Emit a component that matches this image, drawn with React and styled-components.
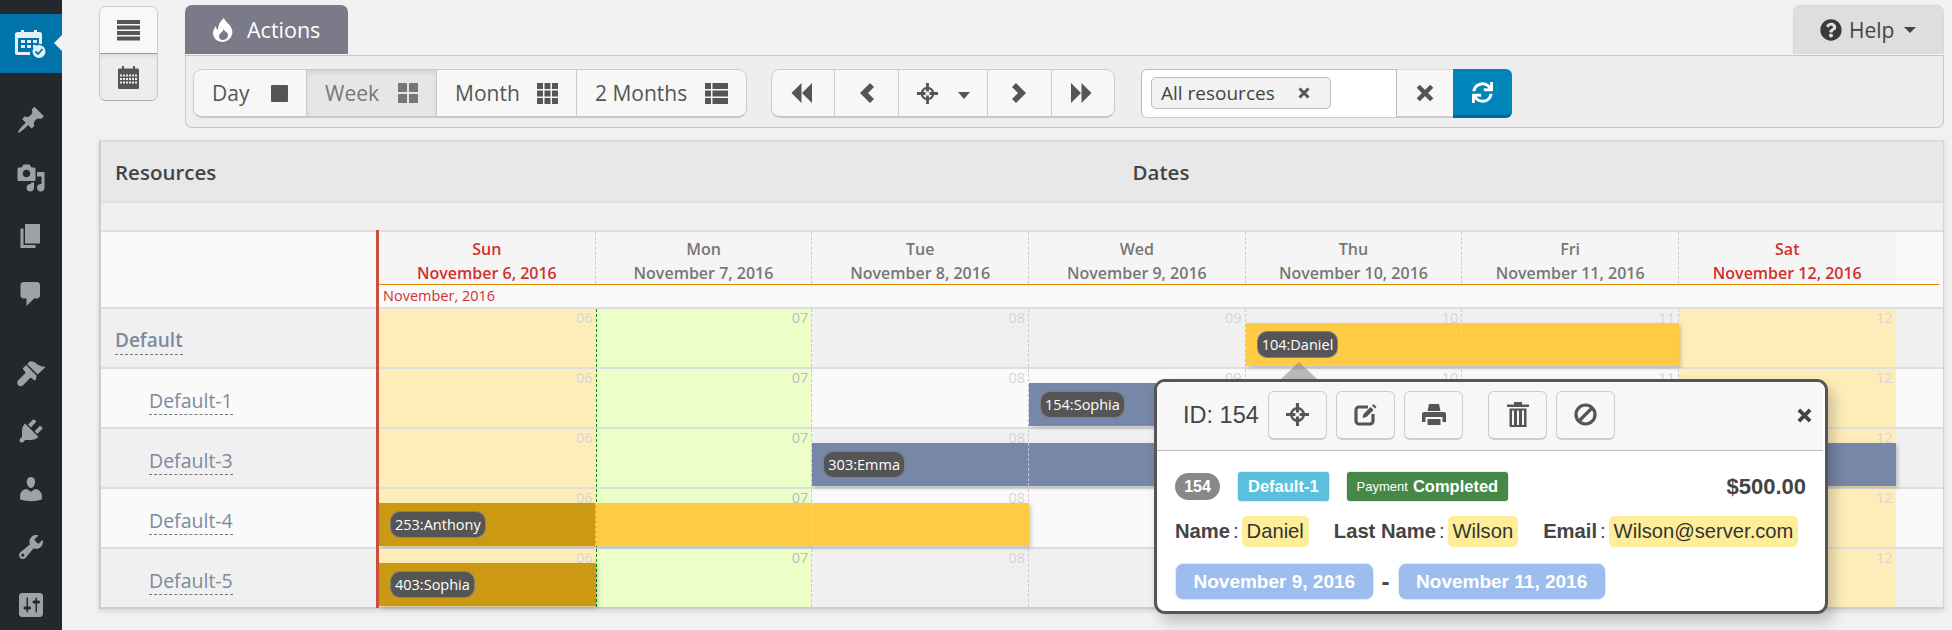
import styled, { createGlobalStyle } from "styled-components";
import { FaSync, FaQuestionCircle } from "react-icons/fa";

const DAY = 216.67;
const UI_FONT = `"Open Sans", "Noto Sans", sans-serif`;

const GlobalStyle = createGlobalStyle`
  html, body {
    margin: 0;
    padding: 0;
    background: #f1f1f1;
    font-family: ${UI_FONT};
    color: #444;
    overflow: hidden;
  }
  * { box-sizing: border-box; }
`;

const dashicons = {
  pin: "M10.44 3.02l1.82-1.82 6.36 6.35-1.83 1.82c-1.05-.68-2.48-.57-3.41.36l-.75.75c-.92.93-1.04 2.35-.35 3.41l-1.83 1.82-2.41-2.41-2.8 2.79c-.42.42-3.38 2.71-3.8 2.29s1.86-3.39 2.28-3.81l2.79-2.79L4.1 9.36l1.83-1.82c1.05.69 2.48.57 3.4-.36l.75-.75c.93-.92 1.05-2.35.36-3.41z",
  media: "M13 11V4c0-.55-.45-1-1-1h-1.67L9 1H5L3.67 3H2c-.55 0-1 .45-1 1v7c0 .55.45 1 1 1h10c.55 0 1-.45 1-1zM7 4.5c1.38 0 2.5 1.12 2.5 2.5S8.38 9.5 7 9.5 4.5 8.38 4.5 7 5.62 4.5 7 4.5zM14 6h5v10.5c0 1.38-1.12 2.5-2.5 2.5S14 17.88 14 16.5s1.12-2.5 2.5-2.5c.17 0 .34.02.5.05V9h-3V6zm-4 8.05V13h2v3.5c0 1.38-1.12 2.5-2.5 2.5S7 17.88 7 16.5 8.12 14 9.5 14c.17 0 .34.02.5.05z",
  pages: "M6 15V2h10v13H6zm-1 1h8v2H3V5h2v11z",
  comments: "M5 2h9c1.1 0 2 .9 2 2v7c0 1.1-.9 2-2 2h-2l-5 5v-5H5c-1.1 0-2-.9-2-2V4c0-1.1.9-2 2-2z",
  brush: "M14.48 11.06L7.41 3.99l1.5-1.5c.5-.56 2.3-.47 3.51.32 1.21.8 1.43 1.28 2.91 2.1 1.18.64 2.45 1.26 4.45.85zM13.77 11.77L6.7 4.7 4.93 6.47c-.39.39-.39 1.02 0 1.41l1.06 1.06c.39.39.39 1.03 0 1.42L1.5 14.9c-.9.9-.9 2.3 0 3.2s2.3.9 3.2 0l4.55-4.55c.39-.39 1.02-.39 1.41 0l1.06 1.06c.39.39 1.02.39 1.41 0z",
  plug: "M13.11 4.36L9.87 7.6 8 5.73l3.24-3.24c.35-.34 1.05-.2 1.56.32.52.51.66 1.21.31 1.55zm-8 1.77l.91-1.12 9.01 9.01-1.19.84c-.71.71-2.63 1.16-3.82 1.16H6.14L4.9 17.26c-.59.59-1.54.59-2.12 0-.59-.58-.59-1.53 0-2.12l1.24-1.24v-3.88c0-1.13.4-3.19 1.09-3.89zm7.26 3.97l3.24-3.24c.34-.35 1.04-.21 1.55.31.52.51.66 1.21.31 1.55l-3.24 3.25z",
  user: "M10 9.25c-2.27 0-2.73-3.44-2.73-3.44C7 4.02 7.82 2 9.97 2c2.16 0 2.98 2.02 2.71 3.81 0 0-.41 3.44-2.68 3.44zm0 2.57L12.72 10c2.39 0 4.52 2.33 4.52 4.53v2.49s-3.65 1.13-7.24 1.13c-3.65 0-7.24-1.13-7.24-1.13v-2.49c0-2.25 1.94-4.48 4.47-4.48z",
  wrench: "M16.68 9.77c-1.34 1.34-3.3 1.67-4.95.99l-5.41 6.52c-.99.99-2.59.99-3.58 0s-.99-2.59 0-3.57l6.52-5.42c-.68-1.65-.35-3.61.99-4.95 1.28-1.28 3.12-1.62 4.72-1.06l-2.89 2.89 2.82 2.82 2.86-2.87c.53 1.58.18 3.39-1.08 4.65zM3.81 16.21c.4.39 1.04.39 1.43 0 .4-.4.4-1.04 0-1.43-.39-.4-1.03-.4-1.43 0-.39.39-.39 1.03 0 1.43z",
  sliders: "M18 16V4c0-1.1-.9-2-2-2H4c-1.1 0-2 .9-2 2v12c0 1.1.9 2 2 2h12c1.1 0 2-.9 2-2zM8 11h1c.55 0 1 .45 1 1s-.45 1-1 1H8v1.5c0 .28-.22.5-.5.5s-.5-.22-.5-.5V13H6c-.55 0-1-.45-1-1s.45-1 1-1h1V5.5c0-.28.22-.5.5-.5s.5.22.5.5V11zm5-2h-1c-.55 0-1-.45-1-1s.45-1 1-1h1V5.5c0-.28.22-.5.5-.5s.5.22.5.5V7h1c.55 0 1 .45 1 1s-.45 1-1 1h-1v5.5c0 .28-.22.5-.5.5s-.5-.22-.5-.5V9z",
};

const App = () => (
  <>
    <GlobalStyle />
    <Page>
      <Sidebar>
        <ActiveItem>
          <CalendarCheckIcon />
        </ActiveItem>
        <MenuGroup>
          {["pin", "media", "pages", "comments"].map((name) => (
            <MenuItem key={name}>
              <MenuIcon d={dashicons[name]} />
            </MenuItem>
          ))}
        </MenuGroup>
        <MenuGroup>
          {["brush", "plug", "user", "wrench", "sliders"].map((name) => (
            <MenuItem key={name}>
              <MenuIcon d={dashicons[name]} />
            </MenuItem>
          ))}
        </MenuGroup>
      </Sidebar>

      <Content>
        <TopArea>
          <ViewToggle>
            <ToggleButton>
              <BarsIcon />
            </ToggleButton>
            <ToggleButton $active>
              <CalendarIcon />
            </ToggleButton>
          </ViewToggle>

          <ActionsArea>
            <TabRow>
              <ActionsTab>
                <FlameIcon />
                Actions
              </ActionsTab>
              <HelpTab>
                <FaQuestionCircle size={22} color="#3a3a3a" />
                Help
                <Caret />
              </HelpTab>
            </TabRow>
            <ActionsPanel>
              <ButtonGroup>
                <RangeButton $w={112}>
                  Day
                  <StopIcon />
                </RangeButton>
                <RangeButton $w={130} $active>
                  Week
                  <ThLargeIcon />
                </RangeButton>
                <RangeButton $w={140}>
                  Month
                  <ThIcon />
                </RangeButton>
                <RangeButton $w={170}>
                  2 Months
                  <ThListIcon />
                </RangeButton>
              </ButtonGroup>

              <ButtonGroup>
                <NavButton $w={62} $pull>
                  <DoubleArrowIcon flip />
                </NavButton>
                <NavButton $w={64}>
                  <ChevronIcon flip />
                </NavButton>
                <NavButton $w={89}>
                  <CrosshairIcon size={21} />
                  <SmallCaret />
                </NavButton>
                <NavButton $w={64}>
                  <ChevronIcon />
                </NavButton>
                <NavButton $w={63} $pull>
                  <DoubleArrowIcon />
                </NavButton>
              </ButtonGroup>

              <SearchBox>
                <SearchInput>
                  <ResourceTag>
                    All resources
                    <CloseIcon size={12} color="#555" />
                  </ResourceTag>
                </SearchInput>
                <ClearButton>
                  <CloseIcon size={18} color="#555" />
                </ClearButton>
                <RefreshButton>
                  <FaSync size={21} color="#fff" />
                </RefreshButton>
              </SearchBox>
            </ActionsPanel>
          </ActionsArea>
        </TopArea>

        <Gantt>
          <TitleBar>
            <TitleLeft>Resources</TitleLeft>
            <TitleCenter>Dates</TitleCenter>
          </TitleBar>
          <SpacerBar />
          <DateHead>
            <DateHeadLeft />
            <DateHeadRight>
              <DayCells>
                {days.map((d, i) => (
                  <DayCell key={d.name} $red={i === 0 || i === 6} $last={i === 6}>
                    <span>{d.name}</span>
                    <span>{d.date}</span>
                  </DayCell>
                ))}
              </DayCells>
              <MonthRow>November, 2016</MonthRow>
            </DateHeadRight>
          </DateHead>

          {rows.map((row) => (
            <Row key={row.name} $alt={row.alt}>
              <ResourceCell $child={row.child}>
                <ResourceName $strong={!row.child}>{row.name}</ResourceName>
              </ResourceCell>
              <Timeline>
                {hours.map((h, i) => (
                  <HourCell
                    key={h}
                    $kind={i === 0 || i === 6 ? "off" : i === 1 ? "today" : "plain"}
                    $noLine={i === 0 || i === 6}
                  >
                    {h}
                  </HourCell>
                ))}
                {row.bars.map((bar) => (
                  <Bar key={bar.label} $from={bar.from}>
                    {bar.parts.map((part, i) => (
                      <BarDay key={i} $color={part} $end={i === bar.parts.length - 1} />
                    ))}
                    <BarChip>{bar.label}</BarChip>
                  </Bar>
                ))}
              </Timeline>
            </Row>
          ))}

          <TodayLine />

          <Popover>
            <PopoverArrow />
            <PopoverHead>
              <PopoverId>ID: 154</PopoverId>
              <ToolGroup>
                <ToolButton>
                  <CrosshairIcon size={23} />
                </ToolButton>
                <ToolButton>
                  <EditIcon />
                </ToolButton>
                <ToolButton>
                  <PrintIcon />
                </ToolButton>
              </ToolGroup>
              <ToolGroup>
                <ToolButton>
                  <TrashIcon />
                </ToolButton>
                <ToolButton>
                  <BanIcon />
                </ToolButton>
              </ToolGroup>
              <PopoverClose>
                <CloseIcon size={15} color="#444" />
              </PopoverClose>
            </PopoverHead>
            <PopoverBody>
              <BadgeLine>
                <CountBadge>154</CountBadge>
                <Label $bg="#5bc0de">Default-1</Label>
                <Label $bg="#468847">
                  <small>Payment</small> Completed
                </Label>
                <Price>$500.00</Price>
              </BadgeLine>
              <FieldLine>
                <Field>
                  <b>Name</b>:<Mark>Daniel</Mark>
                </Field>
                <Field>
                  <b>Last Name</b>:<Mark>Wilson</Mark>
                </Field>
                <Field>
                  <b>Email</b>:<Mark>Wilson@server.com</Mark>
                </Field>
              </FieldLine>
              <DateLine>
                <DateChip>November 9, 2016</DateChip>
                <DateDash>-</DateDash>
                <DateChip>November 11, 2016</DateChip>
              </DateLine>
            </PopoverBody>
          </Popover>
        </Gantt>
      </Content>
    </Page>
  </>
);

const days = [
  { name: "Sun", date: "November 6, 2016" },
  { name: "Mon", date: "November 7, 2016" },
  { name: "Tue", date: "November 8, 2016" },
  { name: "Wed", date: "November 9, 2016" },
  { name: "Thu", date: "November 10, 2016" },
  { name: "Fri", date: "November 11, 2016" },
  { name: "Sat", date: "November 12, 2016" },
];
const hours = ["06", "07", "08", "09", "10", "11", "12"];

const rows = [
  { name: "Default", alt: true, bars: [{ label: "104:Daniel", from: 4, parts: ["#ffcb45", "#ffcb45"] }] },
  { name: "Default-1", child: true, bars: [{ label: "154:Sophia", from: 3, parts: ["#7787a8", "#7787a8"] }] },
  { name: "Default-3", child: true, alt: true, bars: [{ label: "303:Emma", from: 2, parts: Array(5).fill("#7787a8") }] },
  { name: "Default-4", child: true, bars: [{ label: "253:Anthony", from: 0, parts: ["#cb9912", "#ffcb45", "#ffcb45"] }] },
  { name: "Default-5", child: true, alt: true, bars: [{ label: "403:Sophia", from: 0, parts: ["#cb9912"] }] },
];

const MenuIcon = ({ d }) => (
  <svg width="30" height="30" viewBox="0 0 20 20" fill="#9ca2a7">
    <path d={d} />
  </svg>
);

const CalendarCheckIcon = () => (
  <svg width="32" height="30" viewBox="0 0 32 30">
    <path fill="#e3f0f6" fillRule="evenodd" d="M4 3h3V1h3v2h10V1h3v2h3c1 0 2 1 2 2v10h-3V9H4v14h12v3H3c-1 0-2-1-2-2V5c0-1 1-2 3-2z" />
    <path fill="#e3f0f6" d="M7 11h4v3H7zM13 11h4v3h-4zM19 11h4v3h-4zM7 16h4v3H7zM13 16h4v3h-4zM19 16h3v3h-3z" />
    <circle cx="25" cy="22.500" r="6.500" fill="#e3f0f6" />
    <path d="M21.500 22.500l2.500 2.500 4.500-5" fill="none" stroke="#0073aa" strokeWidth="1.800" />
  </svg>
);

const BarsIcon = () => (
  <svg width="23" height="21" viewBox="0 0 23 21" fill="#555">
    <rect width="23" height="4" />
    <rect y="5.500" width="23" height="4" />
    <rect y="11" width="23" height="4" />
    <rect y="16.500" width="23" height="4" />
  </svg>
);

const CalendarIcon = () => (
  <svg width="21" height="23" viewBox="0 0 21 23" fill="#555">
    <path fillRule="evenodd" d="M0 4c0-1 .6-1.500 1.500-1.500H4V0h2v2.500h9V0h2v2.500h2.500c.9 0 1.500.5 1.500 1.500v17.500c0 1-.6 1.500-1.500 1.500h-18C.6 23 0 22.500 0 21.500zM2 8.500v2h2v-2zm3 0v2h2v-2zm3 0v2h2v-2zm3 0v2h2v-2zm3 0v2h2v-2zm3 0v2h2v-2zM2 12v2h2v-2zm3 0v2h2v-2zm3 0v2h2v-2zm3 0v2h2v-2zm3 0v2h2v-2zm3 0v2h2v-2zM2 15.500v2h2v-2zm3 0v2h2v-2zm3 0v2h2v-2zm3 0v2h2v-2zm3 0v2h2v-2zm3 0v2h2v-2z" />
  </svg>
);

const FlameIcon = () => (
  <svg width="20" height="24" viewBox="0 0 20 24" fill="#fff">
    <path fillRule="evenodd" d="M11 0c1 4 7 6 8.300 13 .7 5-3.300 10.500-9.300 11C4 24 0 20 0 15c0-3 1.500-5 3-7 0 2 .6 3 2 4C5 7 7 3 11 0zM10.500 11c0 3-4.500 4-4.500 7.500 0 2 2 4 4.500 3.500 3-.5 4.500-2.500 4.500-5 0-3-3-3-4.500-6z" />
  </svg>
);

const StopIcon = () => (
  <svg width="17" height="17" viewBox="0 0 17 17" fill="#555">
    <rect width="17" height="17" rx="1" />
  </svg>
);

const ThLargeIcon = () => (
  <svg width="20" height="20" viewBox="0 0 20 20" fill="#777">
    <rect width="9" height="9" />
    <rect x="11" width="9" height="9" />
    <rect y="11" width="9" height="9" />
    <rect x="11" y="11" width="9" height="9" />
  </svg>
);

const ThIcon = () => (
  <svg width="21" height="21" viewBox="0 0 21 21" fill="#555">
    {[0, 7.5, 15].map((x) =>
      [0, 7.5, 15].map((y) => <rect key={`${x}${y}`} x={x} y={y} width="6" height="6" />)
    )}
  </svg>
);

const ThListIcon = () => (
  <svg width="23" height="21" viewBox="0 0 23 21" fill="#555">
    {[0, 7.500, 15].map((y) => (
      <g key={y}>
        <rect y={y} width="6" height="6" />
        <rect x="7.500" y={y} width="15.500" height="6" />
      </g>
    ))}
  </svg>
);

const DoubleArrowIcon = ({ flip }) => (
  <svg width="21" height="20" viewBox="0 0 21 20" fill="#555" style={flip ? { transform: "scaleX(-1)" } : undefined}>
    <path d="M0 0l10 10L0 20zM10.500 0l10 10-10 10z" />
  </svg>
);

const ChevronIcon = ({ flip }) => (
  <svg width="15" height="20" viewBox="0 0 15 20" fill="#555" style={flip ? { transform: "scaleX(-1)" } : undefined}>
    <path d="M4 0l10 10L4 20 0 16l6-6-6-6z" />
  </svg>
);

const CrosshairIcon = ({ size }) => (
  <svg width={size} height={size} viewBox="0 0 22 22" fill="none" stroke="#555">
    <circle cx="11" cy="11" r="6" strokeWidth="2.400" />
    <path d="M11 0v9M11 13v9M0 11h9M13 11h9" strokeWidth="3" />
  </svg>
);

const CloseIcon = ({ size, color }) => (
  <svg width={size} height={size} viewBox="0 0 16 16" fill="none" stroke={color}>
    <path d="M2 2l12 12M14 2L2 14" strokeWidth="4" />
  </svg>
);

const EditIcon = () => (
  <svg width="23" height="23" viewBox="0 0 23 23" fill="none" stroke="#555">
    <path d="M14 4H5c-1.500 0-3 1.500-3 3v11c0 1.500 1.500 3 3 3h11c1.500 0 3-1.500 3-3v-7" strokeWidth="3.200" />
    <path d="M8.500 15l1-4 7-7 3 3-7 7z" fill="#555" stroke="none" />
    <path d="M18 2.500l1.500-1.500 3 3-1.500 1.500z" fill="#555" stroke="none" />
  </svg>
);

const PrintIcon = () => (
  <svg width="24" height="21" viewBox="0 0 24 21" fill="#555">
    <path d="M7 0h10l1.500 7h-13z" />
    <path d="M2 8h20c1.200 0 2 .8 2 2v8h-3.500v-5h-17v5H0v-8c0-1.200.8-2 2-2z" />
    <path d="M5.500 15h13v6h-13z" />
  </svg>
);

const TrashIcon = () => (
  <svg width="22" height="25" viewBox="0 0 22 25" fill="#555">
    <path fillRule="evenodd" d="M7 2.500V0h8v2.500h7V5H0V2.500zM2.500 6.500h17V25h-17zM5 8.500V23h2V8.500zm5 0V23h2V8.500zm5 0V23h2V8.500z" />
  </svg>
);

const BanIcon = () => (
  <svg width="23" height="23" viewBox="0 0 23 23" fill="none" stroke="#555" strokeWidth="3.200">
    <circle cx="11.500" cy="11.500" r="9.500" />
    <path d="M4.500 18.500l14-14" />
  </svg>
);

const Page = styled.div`
  display: flex;
  height: 630px;
  width: 1952px;
`;

const Sidebar = styled.nav`
  width: 62px;
  flex: none;
  height: 100%;
  background: #23282d;
  padding-top: 14px;
  overflow: hidden;
`;

const ActiveItem = styled.div`
  position: relative;
  height: 59px;
  background: #0073aa;
  display: flex;
  align-items: center;
  padding-left: 14px;
  &::after {
    content: "";
    position: absolute;
    right: 0;
    top: 21px;
    border: 8px solid transparent;
    border-right-color: #f1f1f1;
    border-left-width: 0;
  }
`;

const MenuGroup = styled.div`
  padding-top: 18px;
  & + & {
    padding-top: 21px;
  }
`;

const MenuItem = styled.div`
  height: 58px;
  display: flex;
  align-items: center;
  justify-content: center;
`;

const Content = styled.main`
  position: relative;
  flex: 1;
  padding: 5px 8px 0 37px;
  min-width: 0;
`;

const TopArea = styled.div`
  display: flex;
  gap: 27px;
`;

const ViewToggle = styled.div`
  width: 59px;
  height: 95px;
  margin-top: 1px;
  flex: none;
  display: flex;
  flex-direction: column;
  border: 1px solid #ccc;
  border-bottom-color: #aaa;
  border-radius: 7px;
  overflow: hidden;
`;

const ToggleButton = styled.div`
  flex: 1;
  display: flex;
  align-items: center;
  justify-content: center;
  background: ${(p) => (p.$active ? "#ededed" : "#f8f8f8")};
  border-top: ${(p) => (p.$active ? "1px solid #999" : "none")};
  box-shadow: ${(p) => (p.$active ? "inset 0 3px 4px rgba(0, 0, 0, 0.06)" : "none")};
`;

const ActionsArea = styled.div`
  flex: 1;
  min-width: 0;
`;

const TabRow = styled.div`
  display: flex;
  justify-content: space-between;
  align-items: flex-end;
  height: 49px;
`;

const ActionsTab = styled.div`
  width: 163px;
  height: 49px;
  background: #7b7a88;
  color: #fff;
  border-radius: 7px 7px 0 0;
  display: flex;
  align-items: center;
  gap: 14px;
  padding-left: 28px;
  font-size: 21.5px;
  font-weight: 500;
`;

const HelpTab = styled.div`
  width: 151px;
  height: 49px;
  background: #dedede;
  color: #444;
  border: 1px solid #d8d8d8;
  border-bottom: none;
  border-radius: 7px 7px 0 0;
  display: flex;
  align-items: center;
  gap: 7px;
  padding-left: 26px;
  font-size: 21px;
`;

const Caret = styled.span`
  margin-left: 3px;
  border: 6px solid transparent;
  border-top-color: #444;
  border-bottom-width: 0;
`;

const ActionsPanel = styled.div`
  height: 73px;
  margin-top: 1px;
  background: #eee;
  border: 1px solid #c8c8c8;
  border-right-color: #c4c4d4;
  border-bottom-color: #c4c4d8;
  border-radius: 0 0 7px 7px;
  padding: 13px 7px 0;
  display: flex;
  align-items: flex-start;
  gap: 24px;
`;

const ButtonGroup = styled.div`
  display: flex;
  height: 49px;
  background: #f7f7f7;
  border: 1px solid #ccc;
  border-bottom: 2px solid #c8c8c8;
  border-radius: 9px;
  overflow: hidden;
  flex: none;
`;

const RangeButton = styled.div`
  width: ${(p) => p.$w}px;
  display: flex;
  align-items: center;
  justify-content: space-between;
  padding: 0 18px 0 18px;
  font-size: 21px;
  color: ${(p) => (p.$active ? "#777" : "#555")};
  background: ${(p) => (p.$active ? "#e6e6e6" : "transparent")};
  box-shadow: ${(p) => (p.$active ? "inset 0 3px 5px rgba(0, 0, 0, 0.08)" : "none")};
  & + & {
    border-left: 1px solid #ccc;
  }
`;

const NavButton = styled.div`
  width: ${(p) => p.$w}px;
  display: flex;
  align-items: center;
  justify-content: center;
  gap: 20px;
  padding-right: ${(p) => (p.$pull ? 4 : 0)}px;
  & + & {
    border-left: 1px solid #ccc;
  }
`;

const SmallCaret = styled.span`
  border: 6px solid transparent;
  border-top: 7px solid #555;
  border-bottom-width: 0;
  margin-top: 4px;
`;

const SearchBox = styled.div`
  display: flex;
  height: 49px;
  flex: none;
  margin-left: 2px;
`;

const SearchInput = styled.div`
  width: 256px;
  background: #fff;
  border: 1px solid #bbb;
  border-bottom-color: #ccc;
  border-radius: 6px 0 0 6px;
  padding: 7px 9px;
`;

const ResourceTag = styled.div`
  width: 180px;
  height: 32px;
  display: flex;
  align-items: center;
  justify-content: space-between;
  padding: 0 20px 0 9px;
  background: #f2f2f2;
  border: 1px solid #bbb;
  border-radius: 5px;
  font-size: 19px;
  color: #444;
`;

const ClearButton = styled.div`
  width: 56px;
  display: flex;
  align-items: center;
  justify-content: center;
  background: #f7f7f7;
  border-bottom: 2px solid #ccc;
  border-top: 1px solid #ddd;
`;

const RefreshButton = styled.div`
  width: 59px;
  display: flex;
  align-items: center;
  justify-content: center;
  background: #0085ba;
  border-bottom: 3px solid #006799;
  border-radius: 0 6px 6px 0;
`;

const Gantt = styled.section`
  position: relative;
  margin-top: 12px;
  width: 1845px;
  border: 2px solid #dedede;
  border-left-color: #ccc;
  border-right: 1px solid #d4d4d4;
  border-bottom-color: #ccc;
  box-shadow: 0 2px 5px rgba(0, 0, 60, 0.12);
  background: #fafafa;
`;

const TitleBar = styled.div`
  display: grid;
  grid-template-columns: 278px 1fr;
  height: 59px;
  background: #e8e8e8;
  align-items: center;
  font-size: 20.5px;
  font-weight: 600;
  color: #444;
`;

const TitleLeft = styled.div`
  padding-left: 14px;
`;

const TitleCenter = styled.div`
  text-align: center;
`;

const SpacerBar = styled.div`
  height: 31px;
  background: #f0f0f0;
  border-top: 2px solid #dedede;
  border-bottom: 2px solid #dedede;
`;

const DateHead = styled.div`
  display: grid;
  grid-template-columns: 278px 1fr;
  height: 75px;
`;

const DateHeadLeft = styled.div`
  background: #fafafa;
`;

const DateHeadRight = styled.div`
  display: flex;
  flex-direction: column;
  padding-right: 4px;
`;

const DayCells = styled.div`
  display: flex;
  height: 53px;
  border-bottom: 1px solid #e38a00;
`;

const DayCell = styled.div`
  width: ${DAY}px;
  flex: none;
  background: #f5f5f5;
  display: flex;
  flex-direction: column;
  align-items: center;
  padding-top: 6px;
  font-size: 16px;
  font-weight: 600;
  line-height: 23.5px;
  color: ${(p) => (p.$red ? "#d2302f" : "#777")};
  border-right: ${(p) => (p.$last ? "none" : "1px dashed #ccc")};
`;

const MonthRow = styled.div`
  font-size: 14.5px;
  font-weight: 500;
  line-height: 22px;
  color: #d2302f;
  padding-left: 4px;
`;

const Row = styled.div`
  display: grid;
  grid-template-columns: 278px 1fr;
  height: 60px;
  border-top: 2px solid #dedede;
  background: ${(p) => (p.$alt ? "#f0f0f0" : "#fafafa")};
`;

const ResourceCell = styled.div`
  display: flex;
  align-items: center;
  padding-left: ${(p) => (p.$child ? 48 : 14)}px;
  padding-top: 6px;
`;

const ResourceName = styled.span`
  font-size: ${(p) => (p.$strong ? 19 : 19.5)}px;
  font-weight: ${(p) => (p.$strong ? 600 : 400)};
  color: #7c8a9e;
  border-bottom: 1px dashed #777;
  line-height: 27px;
`;

const Timeline = styled.div`
  position: relative;
  display: flex;
`;

const hourBackground = { off: "#ffedb9", today: "#ecffc9", plain: "transparent" };

const HourCell = styled.div`
  width: ${DAY}px;
  flex: none;
  background: ${(p) => hourBackground[p.$kind]};
  text-align: right;
  font-size: 14.5px;
  line-height: 18px;
  padding-right: 3px;
  color: ${(p) => (p.$kind === "today" ? "#bbb" : "#d6d6d6")};
  border-right: ${(p) => (p.$noLine ? "none" : "1px dashed #ccc")};
  border-left: ${(p) => (p.$kind === "today" ? "1px dashed #0a8a00" : "none")};
`;

const Bar = styled.div`
  position: absolute;
  top: 14px;
  left: ${(p) => p.$from * DAY}px;
  height: 43px;
  display: flex;
  box-shadow: 2px 2px 4px rgba(0, 0, 0, 0.2);
`;

const BarDay = styled.div`
  width: ${DAY}px;
  background: ${(p) => p.$color};
  border-right: ${(p) => (p.$end ? "none" : "1px dashed rgba(215, 215, 215, 0.8)")};
`;

const BarChip = styled.div`
  position: absolute;
  left: 11px;
  top: 8px;
  height: 27px;
  padding: 0 4px;
  display: flex;
  align-items: center;
  background: #555;
  color: #fff;
  font-size: 14.5px;
  border: 1px solid rgba(255, 255, 255, 0.25);
  border-radius: 10px;
  white-space: nowrap;
`;

const TodayLine = styled.div`
  position: absolute;
  left: 275px;
  top: 88px;
  bottom: -1px;
  width: 3px;
  background: #c9503f;
`;

const Popover = styled.div`
  position: absolute;
  left: 1053px;
  top: 237px;
  width: 674px;
  height: 235px;
  background: #fff;
  border: 3px solid #555;
  border-radius: 11px;
  box-shadow: 6px 8px 14px rgba(0, 0, 0, 0.2);
  font-family: "Liberation Sans", Arial, sans-serif;
  color: #444;
`;

const PopoverArrow = styled.div`
  position: absolute;
  left: 124px;
  top: -20px;
  border: 18px solid transparent;
  border-top: none;
  border-bottom: 17px solid rgba(120, 120, 120, 0.5);
`;

const PopoverHead = styled.div`
  height: 69px;
  background: #f7f7f7;
  border-radius: 8px 8px 0 0;
  border-bottom: 1px solid #bbb;
  margin-right: 2px;
  display: flex;
  align-items: center;
  padding: 4px 0 6px 26px;
`;

const PopoverId = styled.div`
  font-size: 23.5px;
  width: 85px;
  flex: none;
  white-space: nowrap;
`;

const ToolGroup = styled.div`
  display: flex;
  gap: 9px;
  margin-right: 25px;
`;

const ToolButton = styled.div`
  width: 59px;
  height: 49px;
  display: flex;
  align-items: center;
  justify-content: center;
  background: #f7f7f7;
  border: 1px solid #ccc;
  border-bottom-width: 2px;
  border-radius: 6px;
`;

const PopoverClose = styled.div`
  margin-left: auto;
  margin-right: 11px;
  display: flex;
`;

const PopoverBody = styled.div`
  padding: 21px 19px 0 18px;
  display: flex;
  flex-direction: column;
`;

const BadgeLine = styled.div`
  display: flex;
  align-items: center;
  height: 29px;
  gap: 18px;
`;

const CountBadge = styled.span`
  height: 27px;
  width: 45px;
  display: flex;
  align-items: center;
  justify-content: center;
  border-radius: 14px;
  background: #888;
  color: #fff;
  font-size: 16px;
  font-weight: 700;
`;

const Label = styled.span`
  height: 29px;
  padding: 0 9px;
  display: flex;
  align-items: center;
  gap: 5px;
  background: ${(p) => p.$bg};
  border: 1px solid rgba(0, 0, 0, 0.03);
  border-radius: 3px;
  box-shadow: 0 0 0 1px #ececec;
  color: #fff;
  font-size: 16.5px;
  font-weight: 700;
  small {
    font-size: 13px;
    font-weight: 400;
  }
`;

const Price = styled.span`
  margin-left: auto;
  font-size: 22px;
  font-weight: 700;
  color: #444;
`;

const FieldLine = styled.div`
  display: flex;
  align-items: center;
  gap: 25px;
  margin-top: 15px;
  font-size: 20.2px;
  white-space: nowrap;
`;

const Field = styled.span`
  display: flex;
  flex: none;
  align-items: center;
  gap: 3px;
`;

const Mark = styled.span`
  height: 31px;
  padding: 0 5px;
  display: flex;
  align-items: center;
  background: #ffee99;
  border-radius: 5px;
  color: #333;
`;

const DateLine = styled.div`
  display: flex;
  align-items: center;
  gap: 8px;
  margin-top: 16px;
`;

const DateChip = styled.span`
  height: 37px;
  padding: 0 17.5px;
  display: flex;
  align-items: center;
  background: #9dbdee;
  border: 1px solid #e6e9f2;
  border-radius: 8px;
  color: #fff;
  font-size: 19px;
  font-weight: 700;
`;

const DateDash = styled.span`
  font-size: 24px;
  font-weight: 700;
  color: #444;
`;

export default App;
